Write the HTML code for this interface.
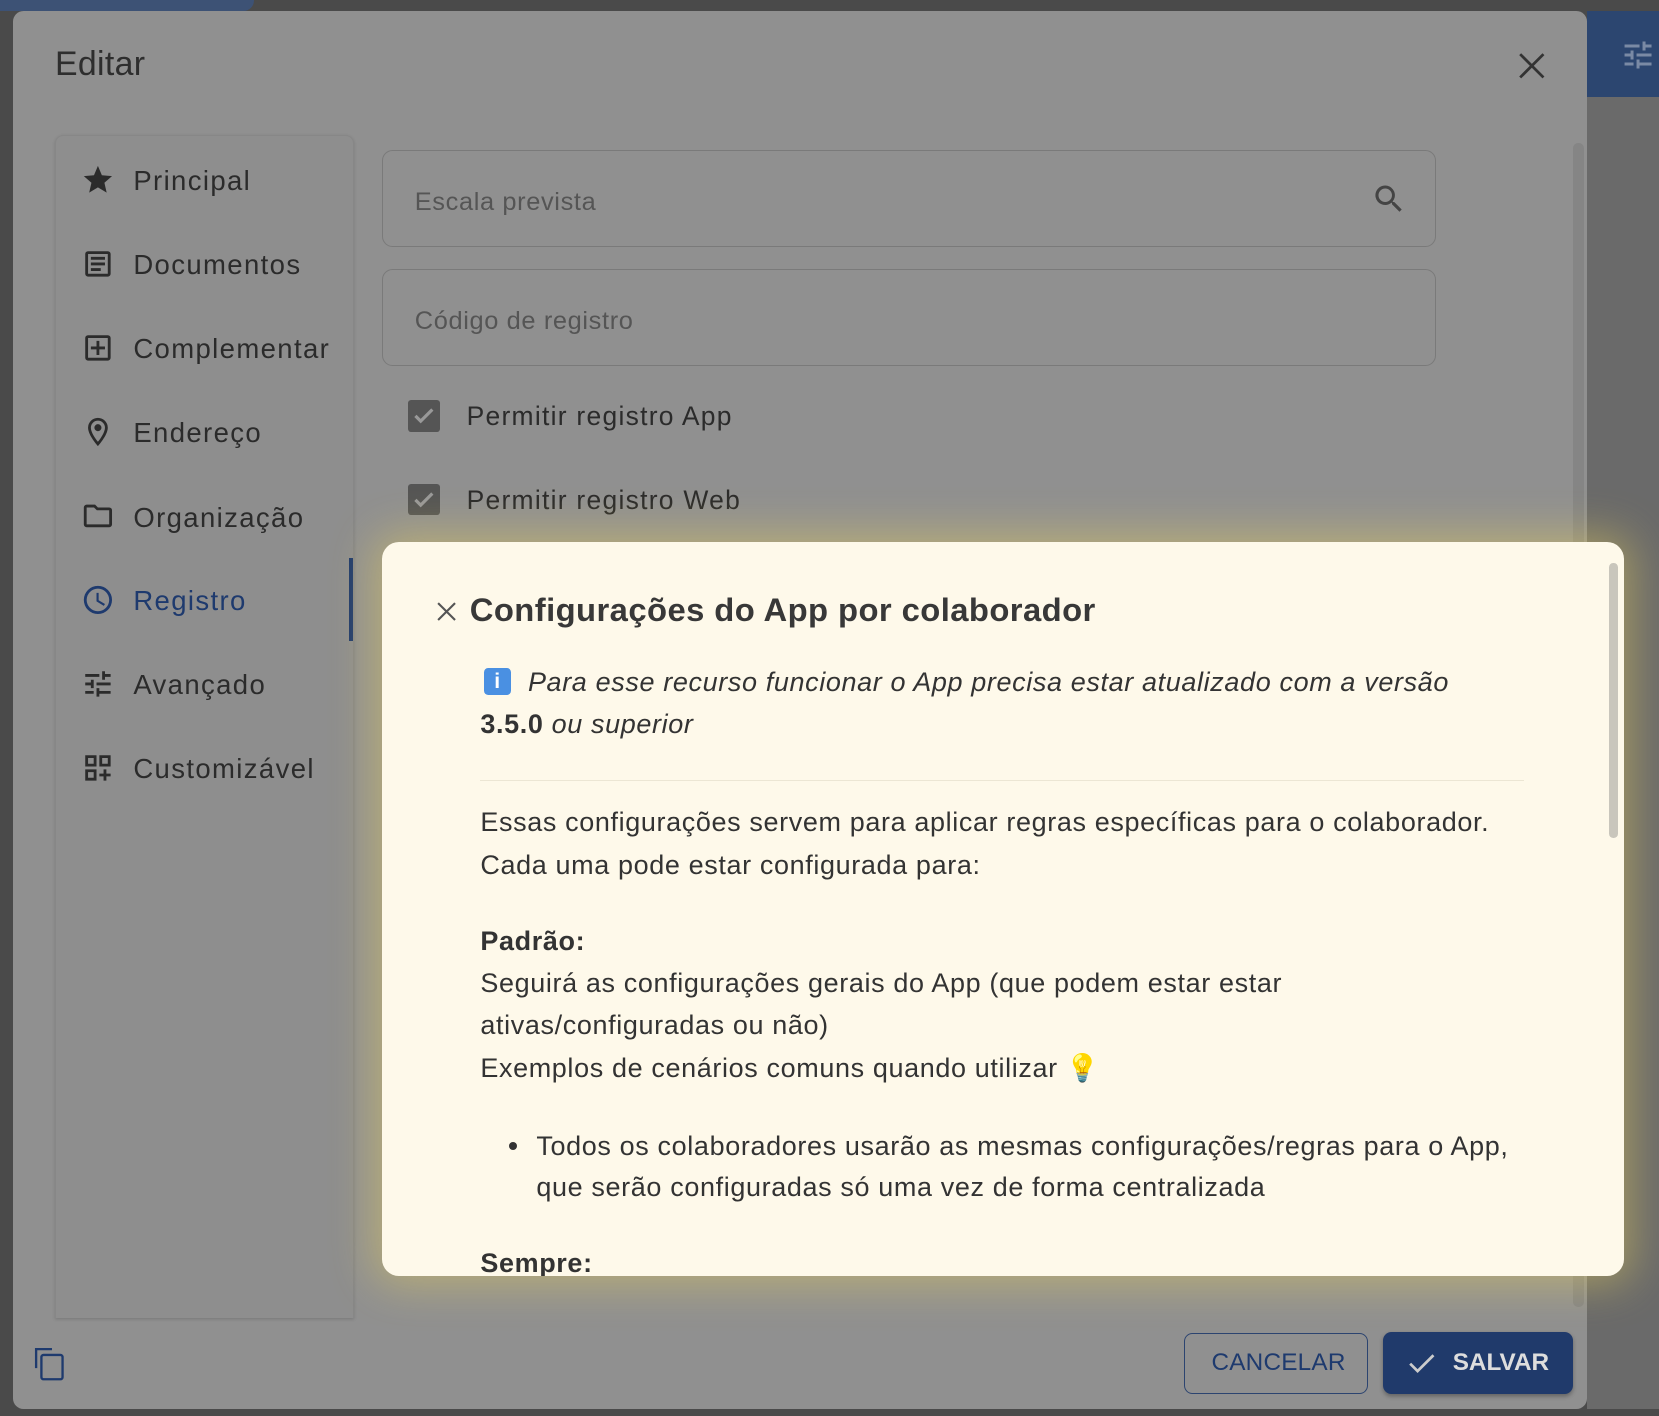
<!DOCTYPE html>
<html><head><meta charset="utf-8"><style>
html,body{margin:0;padding:0;width:1659px;height:1416px;overflow:hidden;background:#4a4a4a}
#w{zoom:1.05804;position:relative;width:1568px;height:1338px;font-family:"Liberation Sans",sans-serif;color:#2b2b2b}
.a{position:absolute}
.dlg{left:12px;top:10px;width:1488px;height:1322px;background:#909090;border-radius:10px}
.side{left:52px;top:128px;width:281px;height:1117px;background:#8e8e8e;border:1px solid #878787;border-bottom:none;border-radius:8px 8px 0 0;box-shadow:0 1px 3px rgba(0,0,0,.15)}
.mi{left:126px;font-size:26px;white-space:nowrap;letter-spacing:1.3px}
.ic{left:77px}
.inp{left:361px;width:994px;height:90px;border:1px solid #7a7a7a;border-radius:10px}
.ph{left:392px;font-size:24px;color:#555;letter-spacing:.6px}
.cb{left:386px;width:30px;height:30px;background:#555;border-radius:3px}
.cl{left:441px;font-size:25px;letter-spacing:1.2px}
.pop{left:361px;top:512px;width:1174px;height:694px;background:#fef9ea;border-radius:16px;box-shadow:0 0 40px 8px rgba(235,210,90,.45);overflow:hidden}
.t{font-size:25.5px;white-space:nowrap;color:#333;letter-spacing:.6px}
</style></head><body><div id="w">
<div class="a" style="left:0;top:0;width:240px;height:10px;background:#3d5275;border-radius:0 0 10px 0"></div>
<div class="a" style="left:1500px;top:10px;width:68px;height:82px;background:#2c4670"></div>
<div class="a" style="left:1500px;top:92px;width:68px;height:1240px;background:#6a6a6a"></div>
<svg class="a" style="left:1530px;top:35px" width="36" height="34" viewBox="0 0 24 24"><path d="M3 17v2h6v-2H3zM3 5v2h10V5H3zm10 16v-2h8v-2h-8v-2h-2v6h2zM7 9v2H3v2h4v2h2V9H7zm14 4v-2H11v2h10zm-6-4h2V7h4V5h-4V3h-2v6z" fill="#7a8aa5"/></svg>
<div class="a dlg"></div>
<div class="a" style="left:52px;top:43px;font-size:32px;color:#2e2e2e;letter-spacing:.3px">Editar</div>
<svg class="a" style="left:1434px;top:48px" width="28" height="28" viewBox="0 0 28 28"><path d="M3 3L25 25M25 3L3 25" stroke="#333" stroke-width="2.6"/></svg>
<div class="a side"></div>
<div class="a" style="left:330px;top:527px;width:4px;height:79px;background:#1e3a6e"></div>
<svg class="a ic" style="top:154px" width="32" height="32" viewBox="0 0 24 24"><path d="M12 17.3l6.2 3.7-1.6-7 5.4-4.7-7.2-.6L12 2 9.2 8.7 2 9.3l5.4 4.7-1.6 7z" fill="#2b2b2b"/></svg>
<div class="a mi" style="top:156px">Principal</div>
<svg class="a ic" style="top:233px" width="32" height="32" viewBox="0 0 24 24"><path d="M19 3H5a2 2 0 00-2 2v14a2 2 0 002 2h14a2 2 0 002-2V5a2 2 0 00-2-2zm0 16H5V5h14v14zM7 7h10v2H7zm0 4h10v2H7zm0 4h7v2H7z" fill="#2b2b2b"/></svg>
<div class="a mi" style="top:235px">Documentos</div>
<svg class="a ic" style="top:313px" width="32" height="32" viewBox="0 0 24 24"><path d="M19 3H5a2 2 0 00-2 2v14a2 2 0 002 2h14a2 2 0 002-2V5a2 2 0 00-2-2zm0 16H5V5h14v14zm-8-2h2v-4h4v-2h-4V7h-2v4H7v2h4z" fill="#2b2b2b"/></svg>
<div class="a mi" style="top:315px">Complementar</div>
<svg class="a ic" style="top:392px" width="32" height="32" viewBox="0 0 24 24"><path d="M12 2a7 7 0 00-7 7c0 5.3 7 13 7 13s7-7.7 7-13a7 7 0 00-7-7zm0 17c-2-2.5-5-6.9-5-10a5 5 0 0110 0c0 2.9-2.9 7.5-5 10z M12 6.5a2.5 2.5 0 100 5 2.5 2.5 0 000-5z" fill="#2b2b2b"/></svg>
<div class="a mi" style="top:394px">Endereço</div>
<svg class="a ic" style="top:472px" width="32" height="32" viewBox="0 0 24 24"><path d="M9.2 6l2 2H20v10H4V6h5.2M10 4H4a2 2 0 00-2 2v12a2 2 0 002 2h16a2 2 0 002-2V8a2 2 0 00-2-2h-8l-2-2z" fill="#2b2b2b"/></svg>
<div class="a mi" style="top:474px">Organização</div>
<svg class="a ic" style="top:551px" width="32" height="32" viewBox="0 0 24 24"><path d="M12 2a10 10 0 100 20 10 10 0 000-20zm0 18a8 8 0 110-16 8 8 0 010 16zm.5-13H11v6l5.2 3.2.8-1.3-4.5-2.7z" fill="#1e3a6e"/></svg>
<div class="a mi" style="top:553px;color:#1e3a6e">Registro</div>
<svg class="a ic" style="top:630px" width="32" height="32" viewBox="0 0 24 24"><path d="M3 17v2h6v-2H3zM3 5v2h10V5H3zm10 16v-2h8v-2h-8v-2h-2v6h2zM7 9v2H3v2h4v2h2V9H7zm14 4v-2H11v2h10zm-6-4h2V7h4V5h-4V3h-2v6z" fill="#2b2b2b"/></svg>
<div class="a mi" style="top:632px">Avançado</div>
<svg class="a ic" style="top:710px" width="32" height="32" viewBox="0 0 24 24"><path d="M3 3h8v8H3zm2 2v4h4V5zM13 3h8v8h-8zm2 2v4h4V5zM3 13h8v8H3zm2 2v4h4v-4zM16 13h2v3h3v2h-3v3h-2v-3h-3v-2h3z" fill="#2b2b2b"/></svg>
<div class="a mi" style="top:712px">Customizável</div>
<div class="a inp" style="top:142px"></div>
<div class="a ph" style="top:178px">Escala prevista</div>
<svg class="a" style="left:1296px;top:171px" width="34" height="34" viewBox="0 0 24 24"><path d="M15.5 14h-.8l-.3-.3A6.5 6.5 0 109.5 16a6.5 6.5 0 004.2-1.6l.3.3v.8l5 5 1.5-1.5-5-5zm-6 0a4.5 4.5 0 110-9 4.5 4.5 0 010 9z" fill="#444"/></svg>
<div class="a inp" style="top:254px"></div>
<div class="a ph" style="top:290px">Código de registro</div>
<div class="a cb" style="top:378px"></div>
<svg class="a" style="left:386px;top:378px" width="30" height="30" viewBox="0 0 30 30"><path d="M7 15l5 5 11-11" stroke="#999" stroke-width="3" fill="none"/></svg>
<div class="a cl" style="top:379px">Permitir registro App</div>
<div class="a cb" style="top:457px"></div>
<svg class="a" style="left:386px;top:457px" width="30" height="30" viewBox="0 0 30 30"><path d="M7 15l5 5 11-11" stroke="#999" stroke-width="3" fill="none"/></svg>
<div class="a cl" style="top:458px">Permitir registro Web</div>
<div class="a" style="left:1487px;top:135px;width:10px;height:1100px;background:#858585;border-radius:5px"></div>
<div class="a" style="left:1119px;top:1260px;width:172px;height:56px;border:1.5px solid #2c4470;border-radius:8px"></div>
<div class="a" style="left:1145px;top:1275px;font-size:23px;color:#1e3a6e;letter-spacing:.2px">CANCELAR</div>
<div class="a" style="left:1307px;top:1259px;width:180px;height:59px;background:#203a6b;border-radius:8px;box-shadow:0 2px 4px rgba(0,0,0,.3)"></div>
<svg class="a" style="left:1330px;top:1277px" width="28" height="24" viewBox="0 0 28 24"><path d="M3 12l7 7L25 4" stroke="#ccc" stroke-width="2.6" fill="none"/></svg>
<div class="a" style="left:1373px;top:1275px;font-size:23px;color:#ddd;font-weight:bold">SALVAR</div>
<svg class="a" style="left:32px;top:1273px" width="30" height="32" viewBox="0 0 30 32"><path d="M2 20V2h15" stroke="#1e3a6e" stroke-width="2.2" fill="none"/><rect x="7" y="7.5" width="20" height="23" rx="2" stroke="#1e3a6e" stroke-width="2.2" fill="none"/></svg>
<div class="a pop">
<div class="a" style="left:1160px;top:20px;width:8px;height:260px;background:#c9c6bc;border-radius:4px"></div>
<svg class="a" style="left:51px;top:56px" width="20" height="20" viewBox="0 0 20 20"><path d="M2 2L18 18M18 2L2 18" stroke="#555" stroke-width="2"/></svg>
<div class="a" style="left:83px;top:47px;font-size:31px;font-weight:bold;color:#383838;white-space:nowrap;letter-spacing:.4px">Configurações do App por colaborador</div>
<div class="a" style="left:96px;top:119px;width:26px;height:26px;background:#4a90e2;border-radius:4px;color:#fff;font-size:20px;text-align:center;line-height:26px;font-weight:bold">i</div>
<div class="a t" style="left:138px;top:118px;font-style:italic">Para esse recurso funcionar o App precisa estar atualizado com a versão</div>
<div class="a t" style="left:93px;top:158px"><b>3.5.0</b> <i>ou superior</i></div>
<div class="a" style="left:93px;top:225px;width:986px;height:1px;background:#ece6d4"></div>
<div class="a t" style="left:93px;top:251px">Essas configurações servem para aplicar regras específicas para o colaborador.</div>
<div class="a t" style="left:93px;top:291px">Cada uma pode estar configurada para:</div>
<div class="a t" style="left:93px;top:363px;font-weight:bold">Padrão:</div>
<div class="a t" style="left:93px;top:403px">Seguirá as configurações gerais do App (que podem estar estar</div>
<div class="a t" style="left:93px;top:443px">ativas/configuradas ou não)</div>
<div class="a t" style="left:93px;top:482px">Exemplos de cenários comuns quando utilizar <span style="color:#f5c542">💡</span></div>
<div class="a" style="left:120px;top:567px;width:8px;height:8px;border-radius:50%;background:#333"></div>
<div class="a t" style="left:146px;top:557px">Todos os colaboradores usarão as mesmas configurações/regras para o App,</div>
<div class="a t" style="left:146px;top:596px">que serão configuradas só uma vez de forma centralizada</div>
<div class="a t" style="left:93px;top:668px;font-weight:bold">Sempre:</div>
</div>
</div></body></html>
